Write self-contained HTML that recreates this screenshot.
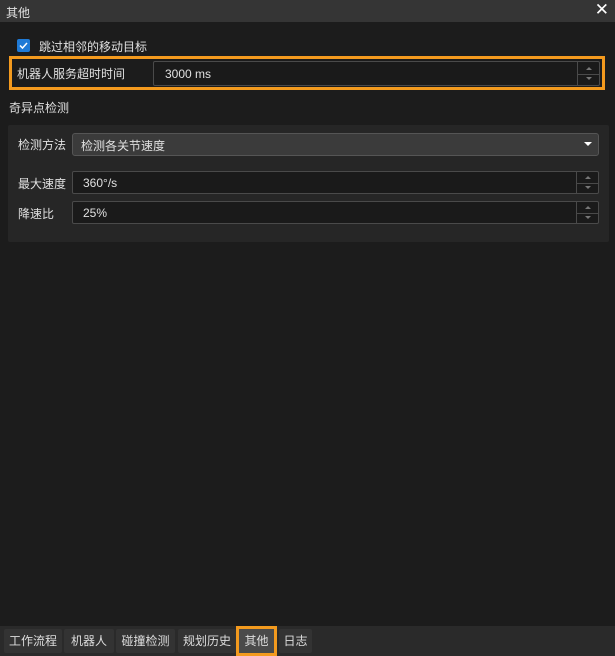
<!DOCTYPE html>
<html><head><meta charset="utf-8"><style>
*{box-sizing:border-box;margin:0;padding:0}
body{width:615px;height:656px;background:#1c1c1c;font-family:"Liberation Sans","Noto Sans CJK SC",sans-serif;font-size:12px;color:#e0e0e0;position:relative;overflow:hidden}
.abs{position:absolute}
.title{left:0;top:0;width:615px;height:22px;background:#353535;}
.inp{background:#1a1a1a;border:1px solid #4a4a4a;border-radius:2px}
.spin{position:absolute;right:0;top:0;bottom:0;width:22px;border-left:1px solid #4a4a4a}
.spin:after{content:"";position:absolute;left:0;right:0;top:50%;border-top:1px solid #4a4a4a}
.up,.dn{position:absolute;left:8px;width:0;height:0;border-left:3px solid transparent;border-right:3px solid transparent}
.up{top:5px;border-bottom:3px solid #777}
.dn{bottom:5px;border-top:3px solid #777}
.tab{position:absolute;top:629px;height:24px;background:#333;color:#ddd;font-size:12px;line-height:24px;text-align:center;border-radius:2px}
</style></head><body>
<div class="abs title"><span class="abs" style="left:6px;top:4px;font-size:12px">其他</span><span class="abs" style="right:6px;top:0px;font-size:17px;color:#fff">✕</span></div>
<div class="abs" style="left:17px;top:39px;width:13px;height:13px;background:#1f7ad6;border-radius:2px"><svg width="13" height="13"><path d="M3 6.5l2.5 2.5 4.5-5" stroke="#fff" stroke-width="1.5" fill="none"/></svg></div>
<span class="abs" style="left:39px;top:38px">跳过相邻的移动目标</span>
<div class="abs" style="left:9px;top:56px;width:596px;height:34px;border:3px solid #f39a1e"></div>
<span class="abs" style="left:17px;top:65px">机器人服务超时时间</span>
<div class="abs inp" style="left:153px;top:61px;width:447px;height:25px"><span class="abs" style="left:11px;top:5px">3000 ms</span><div class="spin"><i class="up"></i><i class="dn"></i></div></div>
<span class="abs" style="left:9px;top:99px">奇异点检测</span>
<div class="abs" style="left:8px;top:125px;width:601px;height:117px;background:#262626;border-radius:2px"></div>
<span class="abs" style="left:18px;top:136px">检测方法</span>
<div class="abs" style="left:72px;top:133px;width:527px;height:23px;background:#3b3b3b;border:1px solid #555;border-radius:3px"><span class="abs" style="left:8px;top:3px">检测各关节速度</span><i class="abs" style="right:6px;top:8px;border-left:4px solid transparent;border-right:4px solid transparent;border-top:4px solid #fff"></i></div>
<span class="abs" style="left:18px;top:175px">最大速度</span>
<div class="abs inp" style="left:72px;top:171px;width:527px;height:23px"><span class="abs" style="left:10px;top:4px">360°/s</span><div class="spin"><i class="up" style="top:4px"></i><i class="dn" style="bottom:4px"></i></div></div>
<span class="abs" style="left:18px;top:205px">降速比</span>
<div class="abs inp" style="left:72px;top:201px;width:527px;height:23px"><span class="abs" style="left:10px;top:4px">25%</span><div class="spin"><i class="up" style="top:4px"></i><i class="dn" style="bottom:4px"></i></div></div>
<div class="abs" style="left:0;top:626px;width:615px;height:30px;background:#2a2a2a"></div>
<div class="tab" style="left:4px;width:58px">工作流程</div>
<div class="tab" style="left:64px;width:50px">机器人</div>
<div class="tab" style="left:116px;width:59px">碰撞检测</div>
<div class="tab" style="left:178px;width:58px">规划历史</div>
<div class="tab" style="left:236px;top:626px;height:30px;width:41px;border:3px solid #f39a1e;background:#4a4a4a;line-height:24px;border-radius:0">其他</div>
<div class="tab" style="left:279px;width:33px">日志</div>
</body></html>
